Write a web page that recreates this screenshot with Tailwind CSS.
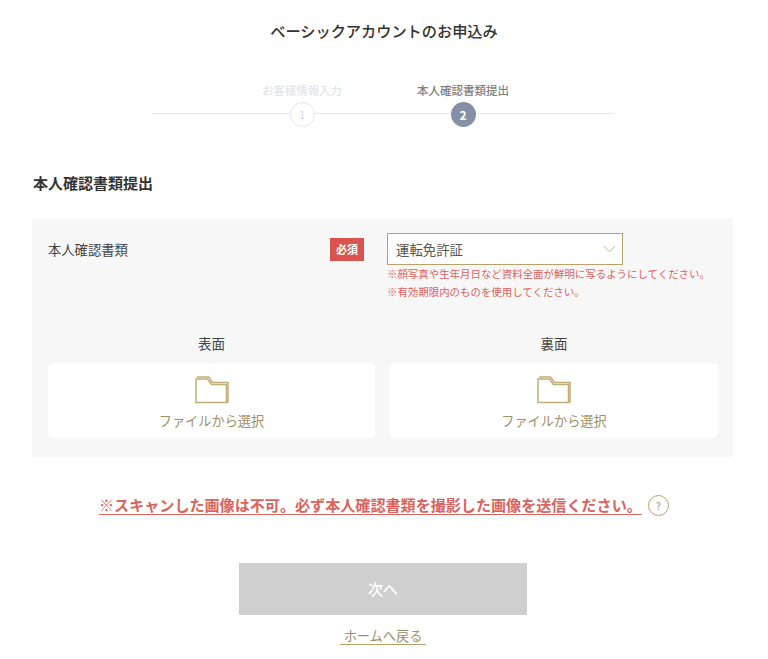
<!DOCTYPE html>
<html lang="ja">
<head>
    <title>ベーシックアカウントのお申込み</title>
    <meta charset="UTF-8">
    <meta name="viewport" content="width=device-width, initial-scale=1.0">
    <script src="https://cdn.jsdelivr.net/npm/@tailwindcss/browser@4"></script>
</head>
<body class="bg-white overflow-hidden font-['Noto_Sans_CJK_JP',sans-serif] text-[#444]">
    <div class="w-[768px] h-[659px] overflow-hidden flex flex-col">
        <h1 class="mt-[20px] h-[20px] text-center text-[15.2px] leading-[20px] font-medium text-[#333]">ベーシックアカウントのお申込み</h1>

        <!-- steps -->
        <div class="relative mt-[41px] mx-[152px] h-[46px]">
            <div class="absolute left-0 right-[2px] top-[32px] h-[1px] bg-[#e8e9ec]"></div>
            <div class="absolute left-[90px] top-0 w-[120px] flex flex-col items-center">
                <p class="h-[18px] text-[11.4px] leading-[18px] font-medium whitespace-nowrap text-[#e2e4e7]">お客様情報入力</p>
                <span class="mt-[3px] w-[25px] h-[25px] rounded-full border border-[#e6e7ea] bg-white text-[#d5d7db] text-[10px] flex items-center justify-center">1</span>
            </div>
            <div class="absolute left-[251px] top-0 w-[120px] flex flex-col items-center">
                <p class="h-[18px] text-[11.5px] leading-[18px] font-medium whitespace-nowrap text-[#808080]">本人確認書類提出</p>
                <span class="mt-[3px] w-[25px] h-[25px] rounded-full bg-[#8590a6] text-white text-[12px] font-bold flex items-center justify-center">2</span>
            </div>
        </div>

        <h2 class="mt-[46px] ml-[33px] h-[20px] text-[15px] leading-[20px] font-bold text-[#333]">本人確認書類提出</h2>

        <!-- form panel -->
        <div class="mt-[25px] mx-[32px] w-[701px] h-[239px] bg-[#f7f7f7] pl-[16px] pr-[15px] pt-[15px]">
            <div class="flex">
                <p class="w-[282px] shrink-0 pt-[8px] text-[13.3px] leading-[18px]">本人確認書類</p>
                <div class="w-[34px] shrink-0 mt-[5px] h-[23px] bg-[#d9534f] text-white text-[11px] font-bold flex items-center justify-center">必須</div>
                <div class="ml-[23px] w-[331px]">
                    <div class="w-[236px] h-[32px] bg-white border-[1.5px] border-[#b9a266] flex items-center justify-between pl-[8px] pr-[6px]">
                        <span class="text-[13.4px] text-[#555]">運転免許証</span>
                        <svg width="13" height="8" viewBox="0 0 14 8" fill="none" stroke="#b9a97a" stroke-width="1"><path d="M1 1l6 6 6-6"/></svg>
                    </div>
                    <p class="text-[10.45px] leading-[18px] whitespace-nowrap text-[#d9635f]">※顔写真や生年月日など資料全面が鮮明に写るようにしてください。</p>
                    <p class="text-[10.45px] leading-[18px] whitespace-nowrap text-[#d9635f]">※有効期限内のものを使用してください。</p>
                </div>
            </div>

            <div class="mt-[32px] flex gap-[15px]">
                <div class="w-[327px] flex flex-col items-center">
                    <p class="h-[20px] text-[13.5px] leading-[20px]">表面</p>
                    <div class="mt-[10px] w-full h-[75px] bg-white rounded-[5px] flex flex-col items-center pt-[13px]">
                        <svg width="34" height="28" viewBox="0 0 34 28" fill="none" stroke="#c2ad78" stroke-width="1.5"><path d="M3 2.5V1h10.5l4 5.5H33v19.5h-1.5"/><path d="M1 26.5V3h11.5l4 5.5H31.500v18z" fill="#fff"/></svg>
                        <span class="mt-[8px] text-[13.2px] leading-[18px] text-[#a08f68]">ファイルから選択</span>
                    </div>
                </div>
                <div class="w-[328px] flex flex-col items-center">
                    <p class="h-[20px] text-[13.5px] leading-[20px]">裏面</p>
                    <div class="mt-[10px] w-full h-[75px] bg-white rounded-[5px] flex flex-col items-center pt-[13px]">
                        <svg width="34" height="28" viewBox="0 0 34 28" fill="none" stroke="#c2ad78" stroke-width="1.5"><path d="M3 2.5V1h10.5l4 5.5H33v19.5h-1.5"/><path d="M1 26.5V3h11.5l4 5.5H31.500v18z" fill="#fff"/></svg>
                        <span class="mt-[8px] text-[13.2px] leading-[18px] text-[#a08f68]">ファイルから選択</span>
                    </div>
                </div>
            </div>
        </div>

        <!-- warning -->
        <div class="mt-[36px] ml-[99px] h-[24px] flex items-center">
            <span class="text-[15.08px] leading-[18px] font-bold whitespace-nowrap text-[#d9635f] border-b-[1.5px] border-[#d9635f]">※スキャンした画像は不可。必ず本人確認書類を撮影した画像を送信ください。</span>
            <span class="ml-[6px] w-[21px] h-[21px] rounded-full border-[1.5px] border-[#b9a266] text-[#a08f68] text-[10px] flex items-center justify-center">?</span>
        </div>

        <button class="mt-[46px] ml-[239px] w-[288px] h-[52px] bg-[#cfcfcf] text-white text-[15px] font-medium flex items-center justify-center">次へ</button>

        <div class="mt-[12px] flex justify-center">
            <a class="ml-[-2px] px-[4px] text-[13.200px] leading-[17px] text-[#a08f68] border-b-[1.5px] border-[#b9a266]">ホームへ戻る</a>
        </div>
    </div>
</body>
</html>
